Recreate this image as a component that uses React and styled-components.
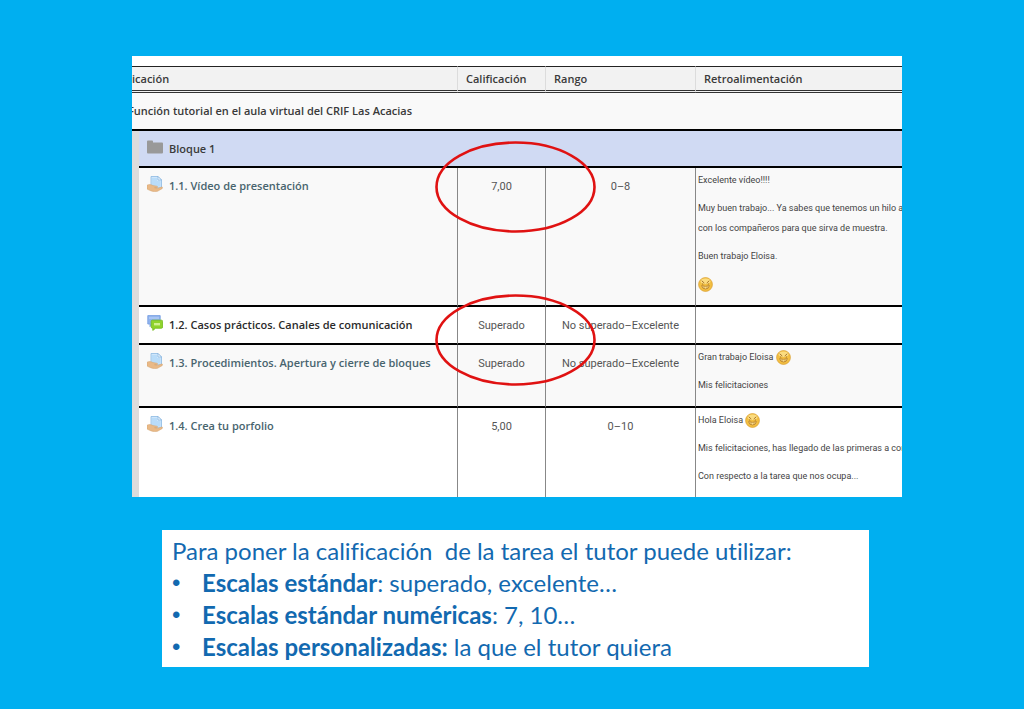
import React from 'react';
import styled, { createGlobalStyle } from 'styled-components';

const GlobalStyle = createGlobalStyle`
  * {
    box-sizing: border-box;
  }

  body {
    margin: 0;
    background-color: #00aff0;
  }
`;

const Slide = styled.main`
  min-height: 100vh;
  padding: 56px 122px 40px 132px;
  background-color: #00aff0;
`;

const Capture = styled.section`
  position: relative;
  overflow: hidden;
  padding-top: 10px;
  background-color: #fff;
  font-family: Roboto, "Open Sans", sans-serif;
`;

// The report is scrolled a little to the right inside its frame
const GradeTable = styled.table`
  width: calc(100% + 4px);
  margin-left: -4px;
  table-layout: fixed;
  border-collapse: separate;
  border-spacing: 0;
  font-size: 11px;
  line-height: 20px;
  color: #3a3a3a;

  th {
    font-family: "Open Sans", Roboto, sans-serif;
    font-weight: 600;
  }
`;

const Col = styled.col`
  width: ${(props) => props.$width || 'auto'};
`;

const HeadCell = styled.th`
  padding: 0 0 0 ${(props) => (props.$first ? '4px' : '8px')};
  border-top: 1px solid #222;
  border-bottom: 3px double #333;
  border-left: ${(props) => (props.$first ? 'none' : '1px solid #dcdcdc')};
  background-color: #f2f2f2;
  line-height: 23px;
  text-align: left;
  white-space: nowrap;
`;

const CourseCell = styled.th`
  padding: 8px 0;
  border-bottom: 2px solid #000;
  background-color: #f9f9f9;
  text-align: left;
`;

const Gutter = styled.td`
  padding: 0;
  background-color: #dcdcdc;
`;

const BlockCell = styled.th`
  padding: 8px 8px 7px;
  border-bottom: 2px solid #000;
  background-color: #d0daf3;
  text-align: left;
`;

const ItemRow = styled.tr`
  background-color: ${(props) => (props.$shaded ? '#f9f9f9' : '#fff')};

  > * {
    border-bottom: 2px solid #000;
    vertical-align: top;
  }

  &:last-child > * {
    border-bottom: none;
  }
`;

const ItemCell = styled.th`
  padding: 8px;
  text-align: left;
  white-space: nowrap;
`;

const ItemLabel = styled.span`
  display: flex;
  align-items: center;
  gap: 6px;
  height: 20px;

  svg {
    flex: none;
    margin-bottom: 4px;
  }
`;

const ItemLink = styled.a`
  color: ${(props) => (props.$dark ? '#2b2b2b' : '#48646e')};
  text-decoration: none;
`;

const ValueCell = styled.td`
  padding: 9px 0 7px;
  border-left: 1px solid #888;
  color: #555;
  text-align: center;
  white-space: nowrap;
`;

const FeedbackCell = styled.td`
  padding: 2px 0 10px 2px;
  border-left: 1px solid #888;
  overflow: hidden;
  font-size: 9px;
  color: #444;
  white-space: nowrap;
`;

const Paragraph = styled.p`
  height: ${(props) => props.$lines * 20}px;
  margin: 0 0 8px;
  white-space: pre;

  &:last-child {
    margin-bottom: 1px;
  }

  svg {
    vertical-align: middle;
  }
`;

const Mark = styled.svg`
  position: absolute;
  left: 302px;
  top: ${(props) => props.$top}px;
  pointer-events: none;
`;

const Notes = styled.section`
  margin: 33px 33px 0 30px;
  padding: 5px 10px 4px;
  background-color: #fff;
  color: #1269b0;
  font-family: Lato, "Open Sans", sans-serif;
  font-size: 24px;
  font-variant-ligatures: none;
  line-height: 32px;
`;

const Intro = styled.p`
  margin: 0;
  white-space: pre-wrap;
`;

const ScaleList = styled.ul`
  margin: 0;
  padding: 0;
  list-style: none;
`;

const Scale = styled.li`
  display: flex;

  &::before {
    content: '•';
    flex: 0 0 30px;
    font-family: "Liberation Sans", sans-serif;
  }
`;

const FolderIcon = () => (
  <svg width="16" height="16" viewBox="0 0 16 16" aria-hidden="true">
    <path d="M0 2.4Q0 1.4 1 1.4H5Q6 1.4 6 2.4V3.4H15Q16 3.4 16 4.4V13.6Q16 14.6 15 14.6H1Q0 14.6 0 13.6Z" fill="#999" />
  </svg>
);

const TaskIcon = () => (
  <svg width="16" height="16" viewBox="0 0 16 16" aria-hidden="true">
    <path d="M4 .5H11L14.5 4V12H4Z" fill="#cfe6fb" stroke="#8bb9e2" strokeWidth=".8" />
    <path d="M5 2H10V5H13.5V10.5H5Z" fill="#b9dcf9" />
    <path d="M11 .5V4H14.5Z" fill="#f4faff" stroke="#7fb0dc" strokeWidth=".7" />
    <path d="M0 9.2C2 8.2 4 8.4 6 9.6L10 10.2C11 10.6 10.8 11.6 9.6 11.7H7.5L11 12.2L14.6 11C15.8 10.8 16 12 15 12.7L10.5 15.3C7 16.2 3.5 15 0 13Z" fill="#e9b987" stroke="#d3a26f" strokeWidth=".5" />
  </svg>
);

const ForumIcon = () => (
  <svg width="16" height="16" viewBox="0 0 16 16" aria-hidden="true">
    <path d="M.8.6H13.2V9H5.5L3 11.6V9H.8Z" fill="#8fb3ee" stroke="#7ba2e3" strokeWidth=".9" />
    <path d="M2 1.8H12V4H2Z" fill="#a9c6f5" />
    <path d="M5.2 5.2H14.4Q15.6 5.2 15.6 6.4V12Q15.6 13.2 14.4 13.2H8.6L5.8 15.4V13.2Q4.2 13.2 4.2 12V6.4Q4.2 5.2 5.2 5.2Z" fill="#8fd32c" stroke="#78bd22" strokeWidth=".9" />
    <path d="M7 9.2H13" stroke="#d0f08f" strokeWidth="2.4" />
  </svg>
);

const SmileIcon = () => (
  <svg width="15" height="15" viewBox="0 0 15 15" role="img" aria-label="Sonrisa">
    <circle cx="7.5" cy="7.5" r="6.9" fill="#f3bf41" stroke="#dca33a" strokeWidth=".8" />
    <ellipse cx="7.5" cy="4.2" rx="4.8" ry="2.8" fill="#fbdc80" />
    <path d="M4 4L6 5.8M11 4L9 5.8" stroke="#a06c22" strokeWidth=".9" strokeLinecap="round" />
    <path d="M4.7 6.4V7.4M10.3 6.4V7.4" stroke="#a06c22" strokeWidth="1.2" />
    <path d="M3.6 8.6Q7.5 10 11.4 8.6Q10.8 12 7.5 12Q4.2 12 3.6 8.6Z" fill="#f8dc8e" stroke="#b57d2b" strokeWidth=".8" />
    <path d="M6 9.2V12M9 9.2V12" stroke="#bd862c" strokeWidth=".6" />
  </svg>
);

const Ellipse = ({ top }) => (
  <Mark $top={top} width="163" height="94" viewBox="0 0 163 94" aria-hidden="true">
    <ellipse cx="81.5" cy="47" rx="79" ry="44.5" fill="none" stroke="#e01212" strokeWidth="2.6" />
  </Mark>
);

const items = [
  {
    name: '1.1. Vídeo de presentación',
    grade: '7,00',
    range: '0–8',
    shaded: true,
    feedback: [
      { text: 'Excelente vídeo!!!!' },
      { text: 'Muy buen trabajo... Ya sabes que tenemos un hilo a\ncon los compañeros para que sirva de muestra.', lines: 2 },
      { text: 'Buen trabajo Eloisa.' },
      { text: '', smile: true },
    ],
  },
  {
    name: '1.2. Casos prácticos. Canales de comunicación',
    grade: 'Superado',
    range: 'No superado–Excelente',
    forum: true,
    feedback: [],
  },
  {
    name: '1.3. Procedimientos. Apertura y cierre de bloques',
    grade: 'Superado',
    range: 'No superado–Excelente',
    shaded: true,
    feedback: [{ text: 'Gran trabajo Eloisa ', smile: true }, { text: 'Mis felicitaciones' }],
  },
  {
    name: '1.4. Crea tu porfolio',
    grade: '5,00',
    range: '0–10',
    feedback: [
      { text: 'Hola Eloisa ', smile: true },
      { text: 'Mis felicitaciones, has llegado de las primeras a con' },
      { text: 'Con respecto a la tarea que nos ocupa...' },
    ],
  },
];

const scales = [
  { title: 'Escalas estándar', rest: ': superado, excelente…' },
  { title: 'Escalas estándar numéricas', rest: ': 7, 10…' },
  { title: 'Escalas personalizadas:', rest: ' la que el tutor quiera' },
];

const App = () => {
  return (
    <Slide>
      <GlobalStyle />
      <Capture>
        <GradeTable>
          <colgroup>
            <Col $width="11px" />
            <Col $width="318px" />
            <Col $width="88px" />
            <Col $width="150px" />
            <Col />
          </colgroup>
          <thead>
            <tr>
              <HeadCell $first colSpan={2}>icación</HeadCell>
              <HeadCell>Calificación</HeadCell>
              <HeadCell>Rango</HeadCell>
              <HeadCell>Retroalimentación</HeadCell>
            </tr>
          </thead>
          <tbody>
            <tr>
              <CourseCell colSpan={5}>Función tutorial en el aula virtual del CRIF Las Acacias</CourseCell>
            </tr>
            <tr>
              <Gutter rowSpan={items.length + 1} />
              <BlockCell colSpan={4}>
                <ItemLabel>
                  <FolderIcon />
                  Bloque 1
                </ItemLabel>
              </BlockCell>
            </tr>
            {items.map((item) => (
              <ItemRow key={item.name} $shaded={item.shaded}>
                <ItemCell>
                  <ItemLabel>
                    {item.forum ? <ForumIcon /> : <TaskIcon />}
                    <ItemLink href="#" $dark={item.forum}>{item.name}</ItemLink>
                  </ItemLabel>
                </ItemCell>
                <ValueCell>{item.grade}</ValueCell>
                <ValueCell>{item.range}</ValueCell>
                <FeedbackCell>
                  {item.feedback.map((line, index) => (
                    <Paragraph key={index} $lines={line.lines || 1}>
                      {line.text}
                      {line.smile && <SmileIcon />}
                    </Paragraph>
                  ))}
                </FeedbackCell>
              </ItemRow>
            ))}
          </tbody>
        </GradeTable>
        <Ellipse top={84} />
        <Ellipse top={237} />
      </Capture>

      <Notes>
        <Intro>{'Para poner la calificación  de la tarea el tutor puede utilizar:'}</Intro>
        <ScaleList>
          {scales.map((scale) => (
            <Scale key={scale.title}>
              <span>
                <strong>{scale.title}</strong>
                {scale.rest}
              </span>
            </Scale>
          ))}
        </ScaleList>
      </Notes>
    </Slide>
  );
};

export default App;
